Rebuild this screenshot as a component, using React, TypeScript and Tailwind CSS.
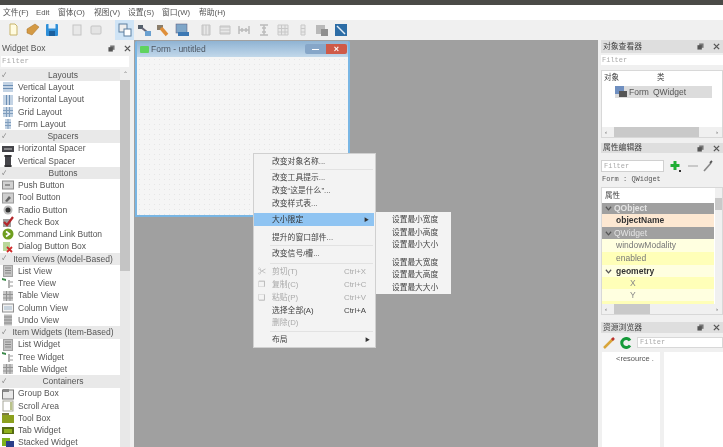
import type { ReactNode } from "react";

const cjk = "font-['Liberation_Sans','Noto_Sans_CJK_SC',sans-serif]";

function Ico({ children }: { children: ReactNode }) {
  return (
    <svg viewBox="0 0 12 12" className="h-[12px] w-[12px] shrink-0">
      {children}
    </svg>
  );
}

const widgetIcons: Record<string, ReactNode> = {
  vlayout: (
    <>
      <rect x="1" y="1" width="10" height="10" fill="#c3d3e4" />
      <path d="M1 4.500h10M1 7.500h10" stroke="#6c8fb5" />
    </>
  ),
  hlayout: (
    <>
      <rect x="1" y="1" width="10" height="10" fill="#c3d3e4" />
      <path d="M4.500 1v10M7.500 1v10" stroke="#6c8fb5" />
    </>
  ),
  grid: (
    <>
      <rect x="1" y="1" width="10" height="10" fill="#c3d3e4" />
      <path d="M4.500 1v10M7.500 1v10M1 4.500h10M1 7.500h10" stroke="#7f9dbd" />
    </>
  ),
  form: (
    <>
      <rect x="3" y="1" width="6" height="10" fill="#c3d3e4" />
      <path d="M6 1v10M3 4.500h6M3 7.500h6" stroke="#7f9dbd" />
    </>
  ),
  hspacer: (
    <>
      <rect x="0" y="3" width="12" height="6" fill="#45454a" />
      <path d="M2 6h8" stroke="#c8c8c8" />
    </>
  ),
  vspacer: (
    <>
      <rect x="3" y="0" width="6" height="12" fill="#45454a" />
      <path d="M2 1h8M2 11h8" stroke="#222" />
    </>
  ),
  push: (
    <>
      <rect x="0.500" y="2" width="11" height="8" fill="#d2d2d2" stroke="#8d8d8d" />
      <path d="M3 6h5" stroke="#555" />
    </>
  ),
  tool: (
    <>
      <rect x="0.500" y="1" width="11" height="10" fill="#cfcfcf" stroke="#9a9a9a" />
      <path d="M3 9l4-5 2 2-4 4z" fill="#666" />
    </>
  ),
  radio: (
    <>
      <circle cx="6" cy="6" r="4.500" fill="#bbb" />
      <circle cx="6" cy="6" r="2.500" fill="#333" />
    </>
  ),
  check: (
    <>
      <rect x="1" y="3" width="8" height="8" fill="#9d9d9d" />
      <path d="M2 6l3 3 6-8" stroke="#b3262a" strokeWidth="2.200" fill="none" />
    </>
  ),
  command: (
    <>
      <circle cx="6" cy="6" r="5.500" fill="#6f9e1f" />
      <path d="M4 3.500L7.500 6 4 8.500" stroke="#fff" strokeWidth="1.600" fill="none" />
    </>
  ),
  dialog: (
    <>
      <rect x="1" y="1" width="7" height="9" fill="#b9d79a" />
      <path d="M5 6l5 5M10 6l-5 5" stroke="#d02b2b" strokeWidth="1.800" />
    </>
  ),
  list: (
    <>
      <rect x="1.500" y="0.500" width="9" height="11" fill="#c4c4c4" stroke="#a2a2a2" />
      <path d="M3 3h6M3 5.500h6M3 8h6" stroke="#888" />
    </>
  ),
  tree: (
    <>
      <path d="M0 1l4 1v2L0 3z" fill="#3c8a4a" />
      <path d="M7 3v8" stroke="#999" strokeWidth="1.500" />
      <rect x="8" y="4" width="3" height="2" fill="#ccc" />
      <rect x="8" y="8" width="3" height="2" fill="#ccc" />
    </>
  ),
  table: (
    <>
      <rect x="1" y="1" width="10" height="10" fill="#c8c8c8" />
      <path d="M4.500 1v10M8 1v10M1 4.500h10M1 8h10" stroke="#929292" />
    </>
  ),
  column: (
    <>
      <rect x="0.500" y="2" width="11" height="8" fill="#f2f2f2" stroke="#909090" />
      <rect x="2" y="4" width="8" height="4" fill="#c9d4de" />
    </>
  ),
  undo: (
    <>
      <rect x="2" y="0.500" width="8" height="11" fill="#bcbcbc" />
      <path d="M2 3h8M2 6h8M2 9h8" stroke="#8a8a8a" />
    </>
  ),
  group: (
    <>
      <rect x="0.500" y="2" width="11" height="9" fill="#e8e8e8" stroke="#777" />
      <rect x="1" y="1" width="6" height="3" fill="#8a8a8a" />
    </>
  ),
  scroll: (
    <>
      <rect x="1" y="1" width="10" height="10" fill="#fff" stroke="#a8a89a" />
      <rect x="8" y="2" width="2.500" height="8" fill="#b9c28a" />
    </>
  ),
  toolbox: (
    <>
      <rect x="0" y="1" width="7" height="3" fill="#7a7a3e" />
      <rect x="0" y="3" width="12" height="8" fill="#8ca01e" />
    </>
  ),
  tab: (
    <>
      <rect x="0" y="3" width="12" height="7" fill="#556b12" />
      <rect x="2" y="5" width="8" height="4" fill="#8fb01c" />
    </>
  ),
  stacked: (
    <>
      <rect x="0" y="1" width="8" height="8" fill="#7fb21c" />
      <rect x="4" y="4" width="8" height="8" fill="#2b3f8a" />
    </>
  ),
};

type Row = { label: string; icon?: string; header?: boolean };

const widgetRows: Row[] = [
  { label: "Layouts", header: true },
  { label: "Vertical Layout", icon: "vlayout" },
  { label: "Horizontal Layout", icon: "hlayout" },
  { label: "Grid Layout", icon: "grid" },
  { label: "Form Layout", icon: "form" },
  { label: "Spacers", header: true },
  { label: "Horizontal Spacer", icon: "hspacer" },
  { label: "Vertical Spacer", icon: "vspacer" },
  { label: "Buttons", header: true },
  { label: "Push Button", icon: "push" },
  { label: "Tool Button", icon: "tool" },
  { label: "Radio Button", icon: "radio" },
  { label: "Check Box", icon: "check" },
  { label: "Command Link Button", icon: "command" },
  { label: "Dialog Button Box", icon: "dialog" },
  { label: "Item Views (Model-Based)", header: true },
  { label: "List View", icon: "list" },
  { label: "Tree View", icon: "tree" },
  { label: "Table View", icon: "table" },
  { label: "Column View", icon: "column" },
  { label: "Undo View", icon: "undo" },
  { label: "Item Widgets (Item-Based)", header: true },
  { label: "List Widget", icon: "list" },
  { label: "Tree Widget", icon: "tree" },
  { label: "Table Widget", icon: "table" },
  { label: "Containers", header: true },
  { label: "Group Box", icon: "group" },
  { label: "Scroll Area", icon: "scroll" },
  { label: "Tool Box", icon: "toolbox" },
  { label: "Tab Widget", icon: "tab" },
  { label: "Stacked Widget", icon: "stacked" },
];

function DockButtons() {
  return (
    <div className="ml-auto flex items-center gap-[9px] pr-[3px]">
      <svg viewBox="0 0 8 8" className="h-[7px] w-[7px]">
        <rect x="2.500" y="0.500" width="5" height="5" fill="#777" />
        <rect x="0.500" y="2.500" width="5" height="5" fill="#555" />
      </svg>
      <svg viewBox="0 0 8 8" className="h-[7px] w-[7px]">
        <path d="M1 1l6 6M7 1L1 7" stroke="#555" strokeWidth="1.500" />
      </svg>
    </div>
  );
}

function DockTitle({ title, className }: { title: string; className: string }) {
  return (
    <div className={`flex items-center bg-[#dedede] pl-[2px] text-[7.800px] text-[#444] ${className}`}>
      {title}
      <DockButtons />
    </div>
  );
}

function WidgetBox() {
  return (
    <aside className="flex w-[134px] shrink-0 flex-col bg-[#f0f0f0]">
      <div className="flex h-[15px] items-center pl-[2px] pt-[2px] text-[8.500px] text-[#555]">
        Widget Box
        <DockButtons />
      </div>
      <div className="mx-[1px] mt-[1px] flex h-[11px] w-[128px] items-center bg-white pl-[1px] font-['Liberation_Mono',monospace] text-[7.500px] text-[#aaa]">
        Filter
      </div>
      <div className="mt-[2px] flex flex-1 overflow-hidden">
        <div className="flex w-[120px] flex-col bg-white">
          {widgetRows.map((row) =>
            row.header ? (
              <div key={row.label} className="relative flex h-[12.250px] shrink-0 items-center justify-center bg-[#e9e9e9] pl-[6px] text-[8.500px] text-[#555]">
                <span className="absolute left-[2px] text-[6px] text-[#666]">✓</span>
                {row.label}
              </div>
            ) : (
              <div key={row.label} className="flex h-[12.250px] shrink-0 items-center gap-[4px] pl-[2px] text-[8.500px] text-[#555]">
                <Ico>{widgetIcons[row.icon ?? "list"]}</Ico>
                {row.label}
              </div>
            ),
          )}
        </div>
        <div className="flex w-[10px] flex-col bg-[#e8e8e8]">
          <div className="flex h-[11px] items-center justify-center bg-[#efefef] text-[6px] text-[#777]">⌃</div>
          <div className="h-[191px] bg-[#c4c4c4]" />
        </div>
      </div>
    </aside>
  );
}

type MenuRow = { label?: string; shortcut?: string; dim?: boolean; active?: boolean; arrow?: boolean; icon?: string };

function MenuLine({ row }: { row: MenuRow }) {
  return (
    <div
      className={`flex h-[12.800px] items-center pl-[18px] pr-[5px] text-[7.800px] ${row.active ? "w-[120px] bg-[#8fc4f2] text-[#333]" : row.dim ? "text-[#aaa]" : "text-[#444]"}`}
    >
      {row.icon && <span className="absolute left-[4px] text-[8px] text-[#aaa]">{row.icon}</span>}
      <span>{row.label}</span>
      {row.shortcut && <span className="ml-auto w-[26px]">{row.shortcut}</span>}
      {row.arrow && <span className="ml-auto text-[5px] text-[#333]">▶</span>}
    </div>
  );
}

function Sep({ className }: { className: string }) {
  return <div className={`ml-[16px] mr-[2px] border-t border-[#e2e2e2] ${className}`} />;
}

function ContextMenu() {
  return (
    <div className={`absolute left-[119px] top-[113px] h-[195px] w-[123px] border border-[#d0d0d0] bg-[#f3f3f3] pt-[1px] ${cjk}`}>
      <MenuLine row={{ label: "改变对象名称..." }} />
      <Sep className="my-[1.500px]" />
      <MenuLine row={{ label: "改变工具提示..." }} />
      <MenuLine row={{ label: "改变“这是什么”..." }} />
      <MenuLine row={{ label: "改变样式表..." }} />
      <div className="h-[3px]" />
      <MenuLine row={{ label: "大小限定", active: true, arrow: true }} />
      <div className="h-[5px]" />
      <MenuLine row={{ label: "提升的窗口部件..." }} />
      <Sep className="my-[1.500px]" />
      <MenuLine row={{ label: "改变信号/槽..." }} />
      <Sep className="my-[2px]" />
      <div className="relative">
        <MenuLine row={{ label: "剪切(T)", shortcut: "Ctrl+X", dim: true, icon: "✂" }} />
      </div>
      <div className="relative">
        <MenuLine row={{ label: "复制(C)", shortcut: "Ctrl+C", dim: true, icon: "❐" }} />
      </div>
      <div className="relative">
        <MenuLine row={{ label: "粘贴(P)", shortcut: "Ctrl+V", dim: true, icon: "❏" }} />
      </div>
      <MenuLine row={{ label: "选择全部(A)", shortcut: "Ctrl+A" }} />
      <MenuLine row={{ label: "删除(D)", dim: true }} />
      <Sep className="my-[1.500px]" />
      <MenuLine row={{ label: "布局", arrow: true }} />
    </div>
  );
}

function SubMenu() {
  return (
    <div className={`absolute left-[242px] top-[172px] h-[82px] w-[75px] bg-[#f3f3f3] pl-[16px] pt-[2px] text-[7.700px] text-[#444] ${cjk}`}>
      <div className="flex h-[12.300px] items-center">设置最小宽度</div>
      <div className="flex h-[12.300px] items-center">设置最小高度</div>
      <div className="flex h-[12.300px] items-center">设置最小大小</div>
      <div className="h-[5px]" />
      <div className="flex h-[12.800px] items-center">设置最大宽度</div>
      <div className="flex h-[12.800px] items-center">设置最大高度</div>
      <div className="flex h-[12.800px] items-center">设置最大大小</div>
    </div>
  );
}

function FormWindow() {
  return (
    <div className="absolute left-[1px] top-[1px] flex h-[176px] w-[215px] flex-col rounded-t-[2px] bg-[#79b6e4] px-[2px] pb-[2px]">
      <div className="flex h-[16px] items-center bg-gradient-to-b from-[#8fb3d3] to-[#c2d8ea] pl-[3px] text-[8.500px] text-[#4c5560]">
        <span className="mr-[2px] h-[7px] w-[9px] rounded-[1px] bg-[#5fd35f]" />
        Form - untitled
        <div className="ml-auto flex pr-[1px]">
          <span className="flex h-[10px] w-[21px] items-center justify-center rounded-l-[2px] bg-[#86a6c8]">
            <span className="h-[1px] w-[7px] bg-white" />
          </span>
          <span className="flex h-[10px] w-[21px] items-center justify-center rounded-r-[2px] bg-[#cf5a48] text-[9px] leading-none font-bold text-white">×</span>
        </div>
      </div>
      <div className="flex-1 bg-[#f5f5f5] bg-[radial-gradient(#e6e6e6_0.7px,transparent_0.7px)] bg-[size:5px_5px]" />
    </div>
  );
}

function Scrollbar({ thumb }: { thumb: string }) {
  return (
    <div className="flex h-[10px] shrink-0 items-center bg-[#f0f0f0] text-[6px] text-[#555]">
      <span className="w-[12px] pl-[3px]">‹</span>
      <div className={`h-full bg-[#c9c9c9] ${thumb}`} />
      <span className="ml-auto pr-[4px]">›</span>
    </div>
  );
}

function ObjectInspector() {
  return (
    <>
      <DockTitle title="对象查看器" className="h-[13px]" />
      <div className="mt-[2px] flex h-[10px] items-center bg-white pl-[1px] font-['Liberation_Mono',monospace] text-[7px] text-[#aaa]">Filter</div>
      <div className="mt-[5px] flex h-[68px] flex-col border border-[#d8d8d8] bg-white">
        <div className="flex h-[14px] shrink-0 items-center text-[7.500px] text-[#444]">
          <span className="w-[55px] pl-[2px]">对象</span>
          <span>类</span>
        </div>
        <div className="ml-[13px] mr-[10px] mt-[1px] flex h-[12px] items-center gap-[2px] bg-[#dcdcdc] text-[8.500px] text-[#555]">
          <svg viewBox="0 0 12 12" className="h-[12px] w-[12px]">
            <rect x="0" y="0" width="9" height="8" fill="#6f8fc0" />
            <rect x="4" y="5" width="8" height="6" fill="#555" />
          </svg>
          <span className="w-[22px]">Form</span>
          <span>QWidget</span>
        </div>
        <div className="flex-1" />
        <Scrollbar thumb="w-[85px]" />
      </div>
    </>
  );
}

function PropertyRow({ label, className, open }: { label: string; className: string; open?: boolean }) {
  return (
    <div className={`relative flex items-center text-[8.500px] ${className}`}>
      {open && (
        <svg viewBox="0 0 8 8" className="absolute left-[3px] h-[7px] w-[7px]">
          <path d="M1 2l3 3.500L7 2" stroke="#555" strokeWidth="1.400" fill="none" />
        </svg>
      )}
      {label}
    </div>
  );
}

function PropertyEditor() {
  return (
    <>
      <DockTitle title="属性编辑器" className="mt-[5px] h-[10px]" />
      <div className="mt-[7px] flex h-[12px] items-center">
        <div className="flex h-full w-[63px] items-center border border-[#d0d0d0] bg-white pl-[2px] font-['Liberation_Mono',monospace] text-[7px] text-[#aaa]">Filter</div>
        <svg viewBox="0 0 12 12" className="ml-[5px] h-[12px] w-[12px]">
          <path d="M6 1v9M1.500 5.500h9" stroke="#1fae34" strokeWidth="3" />
          <rect x="10" y="10" width="2" height="2" fill="#333" />
        </svg>
        <span className="ml-[7px] h-[2px] w-[10px] bg-[#c9c9c9]" />
        <svg viewBox="0 0 12 12" className="ml-[4px] h-[12px] w-[12px]">
          <path d="M2 11l7-8" stroke="#888" strokeWidth="1.600" />
          <path d="M8 3l2-2" stroke="#555" strokeWidth="1.800" />
        </svg>
      </div>
      <div className="flex h-[15px] items-center pl-[1px] font-['Liberation_Mono',monospace] text-[7px] text-[#555]">Form : QWidget</div>
      <div className="flex h-[128px] flex-col border border-[#d8d8d8] bg-white">
        <div className="flex flex-1 overflow-hidden">
          <div className="flex w-[112px] flex-col overflow-hidden">
            <div className="flex h-[15px] shrink-0 items-center pl-[3px] text-[7.500px] text-[#444]">属性</div>
            <PropertyRow open label="QObject" className="h-[11px] shrink-0 bg-[#a0a0a0] pl-[12px] font-bold text-[#e4e4e4]" />
            <PropertyRow label="objectName" className="h-[13px] shrink-0 bg-[#fde8d2] pl-[14px] font-bold text-[#333]" />
            <PropertyRow open label="QWidget" className="h-[12px] shrink-0 bg-[#a0a0a0] pl-[12px] text-[#e4e4e4]" />
            <PropertyRow label="windowModality" className="h-[13px] shrink-0 bg-[#ffffe0] pl-[14px] text-[#777]" />
            <PropertyRow label="enabled" className="h-[13px] shrink-0 bg-[#ffffb8] pl-[14px] text-[#777]" />
            <PropertyRow open label="geometry" className="h-[12px] shrink-0 bg-[#ffffe0] pl-[14px] font-bold text-[#333]" />
            <PropertyRow label="X" className="h-[12px] shrink-0 bg-[#ffffb8] pl-[28px] text-[#888]" />
            <PropertyRow label="Y" className="h-[12px] shrink-0 bg-[#ffffe0] pl-[28px] text-[#888]" />
            <div className="flex-1 bg-[#ffffb8]" />
          </div>
          <div className="ml-[1px] flex flex-1 flex-col bg-[#f0f0f0]">
            <div className="h-[10px]" />
            <div className="h-[12px] bg-[#c9c9c9]" />
          </div>
        </div>
        <Scrollbar thumb="w-[36px]" />
      </div>
    </>
  );
}

function ResourceBrowser() {
  return (
    <>
      <DockTitle title="资源浏览器" className="mt-[7px] h-[11px]" />
      <div className="mt-[4px] flex h-[11px] items-center">
        <svg viewBox="0 0 12 12" className="ml-[2px] h-[12px] w-[12px]">
          <path d="M1 11L10 2" stroke="#d9a53a" strokeWidth="2.500" />
          <path d="M9 3l2-2" stroke="#b33" strokeWidth="2.500" />
        </svg>
        <svg viewBox="0 0 12 12" className="ml-[5px] h-[12px] w-[12px]">
          <path d="M10 3.500A4.500 4.500 0 1 0 10 8.500" stroke="#169a3a" strokeWidth="3" fill="none" />
        </svg>
        <div className="ml-[5px] flex h-full flex-1 items-center border border-[#d8d8d8] bg-white pl-[2px] font-['Liberation_Mono',monospace] text-[7px] text-[#aaa]">Filter</div>
      </div>
      <div className="mt-[4px] flex flex-1 gap-[4px]">
        <div className="ml-[1px] w-[58px] bg-white pl-[14px] pt-[1px] font-['Liberation_Sans',sans-serif] text-[7.500px] text-[#555]">&lt;resource .</div>
        <div className="flex-1 bg-white" />
      </div>
    </>
  );
}

const toolGroups: { names: string[]; className: string }[] = [
  { names: ["new", "open", "save"], className: "" },
  { names: ["copy", "paste"], className: "ml-[6px]" },
  { names: ["edit", "signal", "buddy", "tab"], className: "ml-[10px]" },
  { names: ["l1", "l2", "l3", "l4", "l5", "l6", "l7", "l8"], className: "ml-[5px] gap-[0.430px]" },
];

const toolIcons: Record<string, ReactNode> = {
  new: <path d="M3 1h5l2 2v9H3z" fill="#fffbe0" stroke="#c8b46a" />,
  open: <path d="M1 6l8-5 4 3-7 8-5-2z" fill="#d49a44" stroke="#a97026" strokeWidth="0.500" />,
  save: (
    <>
      <rect x="1" y="1" width="12" height="12" rx="1" fill="#2f8fd8" />
      <rect x="3.500" y="1" width="7" height="4.500" fill="#e8f2fa" />
      <rect x="4" y="8" width="6" height="5" fill="#1a5f9e" />
    </>
  ),
  copy: <rect x="3" y="2" width="8" height="10" fill="#e8e8e8" stroke="#c4c4c4" />,
  paste: <rect x="2" y="3" width="10" height="8" rx="1" fill="#e4e4e4" stroke="#c4c4c4" />,
  edit: (
    <>
      <rect x="1" y="1" width="8" height="8" fill="#eee" stroke="#5c7f9f" />
      <rect x="6" y="6" width="7" height="7" fill="#fff" stroke="#5c7f9f" />
    </>
  ),
  signal: (
    <>
      <rect x="1" y="2" width="5" height="4" fill="#55606c" />
      <path d="M5 5l5 4" stroke="#667" strokeWidth="2" />
      <rect x="8" y="8" width="6" height="5" fill="#6aa0d0" />
    </>
  ),
  buddy: (
    <>
      <rect x="1" y="2" width="6" height="5" fill="#8a7d6a" />
      <path d="M5 5l6 7" stroke="#df8f3a" strokeWidth="3.500" />
    </>
  ),
  tab: (
    <>
      <rect x="1" y="1" width="11" height="9" fill="#7fa6c8" stroke="#557" strokeWidth="0.500" />
      <rect x="3" y="9" width="11" height="4" fill="#3c78b4" />
    </>
  ),
  l1: <path d="M4 2v10M7 2v10M10 2v10M3 2h8v10H3z" stroke="#c4c4c4" fill="#e8e8e8" />,
  l2: <path d="M2 4h10M2 7h10M2 10h10M2 3h10v8H2z" stroke="#c4c4c4" fill="#e8e8e8" />,
  l3: <path d="M2 3v8M12 3v8M2 7h10M5 5v4M9 5v4" stroke="#bbb" fill="none" strokeWidth="1.500" />,
  l4: <path d="M3 2h8M3 12h8M7 2v10M5 5h4M5 9h4" stroke="#bbb" fill="none" strokeWidth="1.500" />,
  l5: <path d="M2 2h10v10H2zM5.500 2v10M9 2v10M2 5.500h10M2 9h10" stroke="#c8c8c8" fill="#e8e8e8" />,
  l6: <path d="M5 2h4v10H5zM5 5.500h4M5 9h4" stroke="#c8c8c8" fill="#e8e8e8" />,
  l7: (
    <>
      <rect x="1" y="2" width="9" height="9" fill="#b9b9b9" />
      <rect x="6" y="6" width="7" height="7" fill="#8f8f8f" />
    </>
  ),
  l8: (
    <>
      <rect x="1" y="1" width="12" height="12" fill="#2d6da6" />
      <path d="M3 3l8 8" stroke="#e4eef6" strokeWidth="1.500" />
    </>
  ),
};

function Toolbar() {
  return (
    <div className="flex h-[20px] items-center bg-[#f0f0f0] pl-[4px]">
      {toolGroups.map((group) => (
        <div key={group.names[0]} className={`flex items-center ${group.className}`}>
          {group.names.map((name) => (
            <div key={name} className={`flex h-[20px] w-[19px] items-center justify-center ${name === "edit" ? "bg-[#cfe4f6]" : ""}`}>
              <svg viewBox="0 0 14 14" className="h-[14px] w-[14px]">
                {toolIcons[name]}
              </svg>
            </div>
          ))}
        </div>
      ))}
    </div>
  );
}

const menus = [
  { label: "文件(F)", w: "w-[33px]" },
  { label: "Edit", w: "w-[22px]" },
  { label: "窗体(O)", w: "w-[36px]" },
  { label: "视图(V)", w: "w-[34px]" },
  { label: "设置(S)", w: "w-[34px]" },
  { label: "窗口(W)", w: "w-[37px]" },
  { label: "帮助(H)", w: "w-[36px]" },
];

export default function App() {
  return (
    <div className={`flex h-[447px] w-[723px] flex-col overflow-hidden bg-[#f0f0f0] blur-[0.7px] ${cjk}`}>
      <div className="h-[5px] bg-[#4a4a47]" />
      <div className="flex h-[15px] items-center bg-white pl-[3px] text-[7.800px] text-[#555]">
        {menus.map((m) => (
          <span key={m.label} className={m.w}>
            {m.label}
          </span>
        ))}
      </div>
      <Toolbar />
      <div className="flex min-h-0 flex-1">
        <WidgetBox />
        <main className="relative w-[464px] shrink-0 bg-[#a0a0a0]">
          <FormWindow />
          <ContextMenu />
          <SubMenu />
        </main>
        <aside className="flex w-[125px] shrink-0 flex-col overflow-hidden bg-[#f0f0f0] pl-[3px]">
          <ObjectInspector />
          <PropertyEditor />
          <ResourceBrowser />
        </aside>
      </div>
    </div>
  );
}
